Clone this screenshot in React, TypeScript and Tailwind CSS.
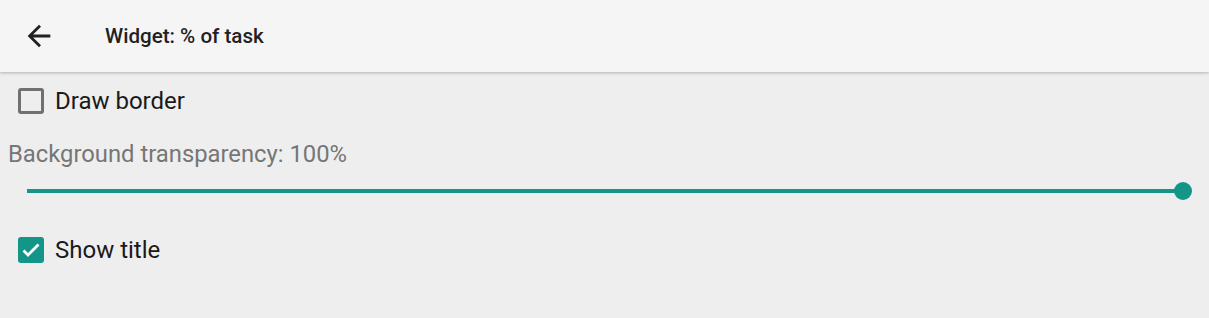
export default function App() {
  return (
    <div className="h-[318px] w-[1209px] overflow-hidden bg-[#eeeeee] font-['Roboto',sans-serif]">
      <header className="relative z-10 flex h-[72px] items-center bg-[#f5f5f5] shadow-[0_1px_3px_rgba(0,0,0,0.25)]">
        <svg viewBox="0 0 24 24" className="ml-[22px] h-[34px] w-[34px] fill-[#212121]">
          <path d="M20 11H7.83l5.59-5.59L12 4l-8 8 8 8 1.41-1.41L7.83 13H20v-2z" />
        </svg>
        <h1 className="ml-[49px] text-[20.6px] font-medium text-[#212121]">Widget: % of task</h1>
      </header>

      <div className="flex h-[56px] items-center pl-[18px] pt-[2px]">
        <span className="h-[26px] w-[26px] rounded-[3px] border-[3px] border-[#707070]" />
        <span className="ml-[11px] text-[24px] text-[#1a1a1a]">Draw border</span>
      </div>

      <p className="ml-[8px] mt-[11px] text-[23.8px] leading-[30px] text-[#767676]">Background transparency: 100%</p>

      <div className="flex h-[44px] items-center pl-[27px] pr-[17px]">
        <div className="h-[4px] flex-1 bg-[#139688]" />
        <div className="-ml-[9px] h-[18px] w-[18px] rounded-full bg-[#139688]" />
      </div>

      <div className="mt-[15px] flex h-[44px] items-center pl-[18px]">
        <span className="flex h-[26px] w-[26px] items-center justify-center rounded-[3px] bg-[#139688]">
          <svg viewBox="0 0 24 24" className="h-[24px] w-[24px]" fill="none" stroke="white" strokeWidth="2.8">
            <path d="M4.5 12.5l4.5 4.5L19.5 6.5" />
          </svg>
        </span>
        <span className="ml-[11px] text-[24px] text-[#1a1a1a]">Show title</span>
      </div>
    </div>
  );
}
